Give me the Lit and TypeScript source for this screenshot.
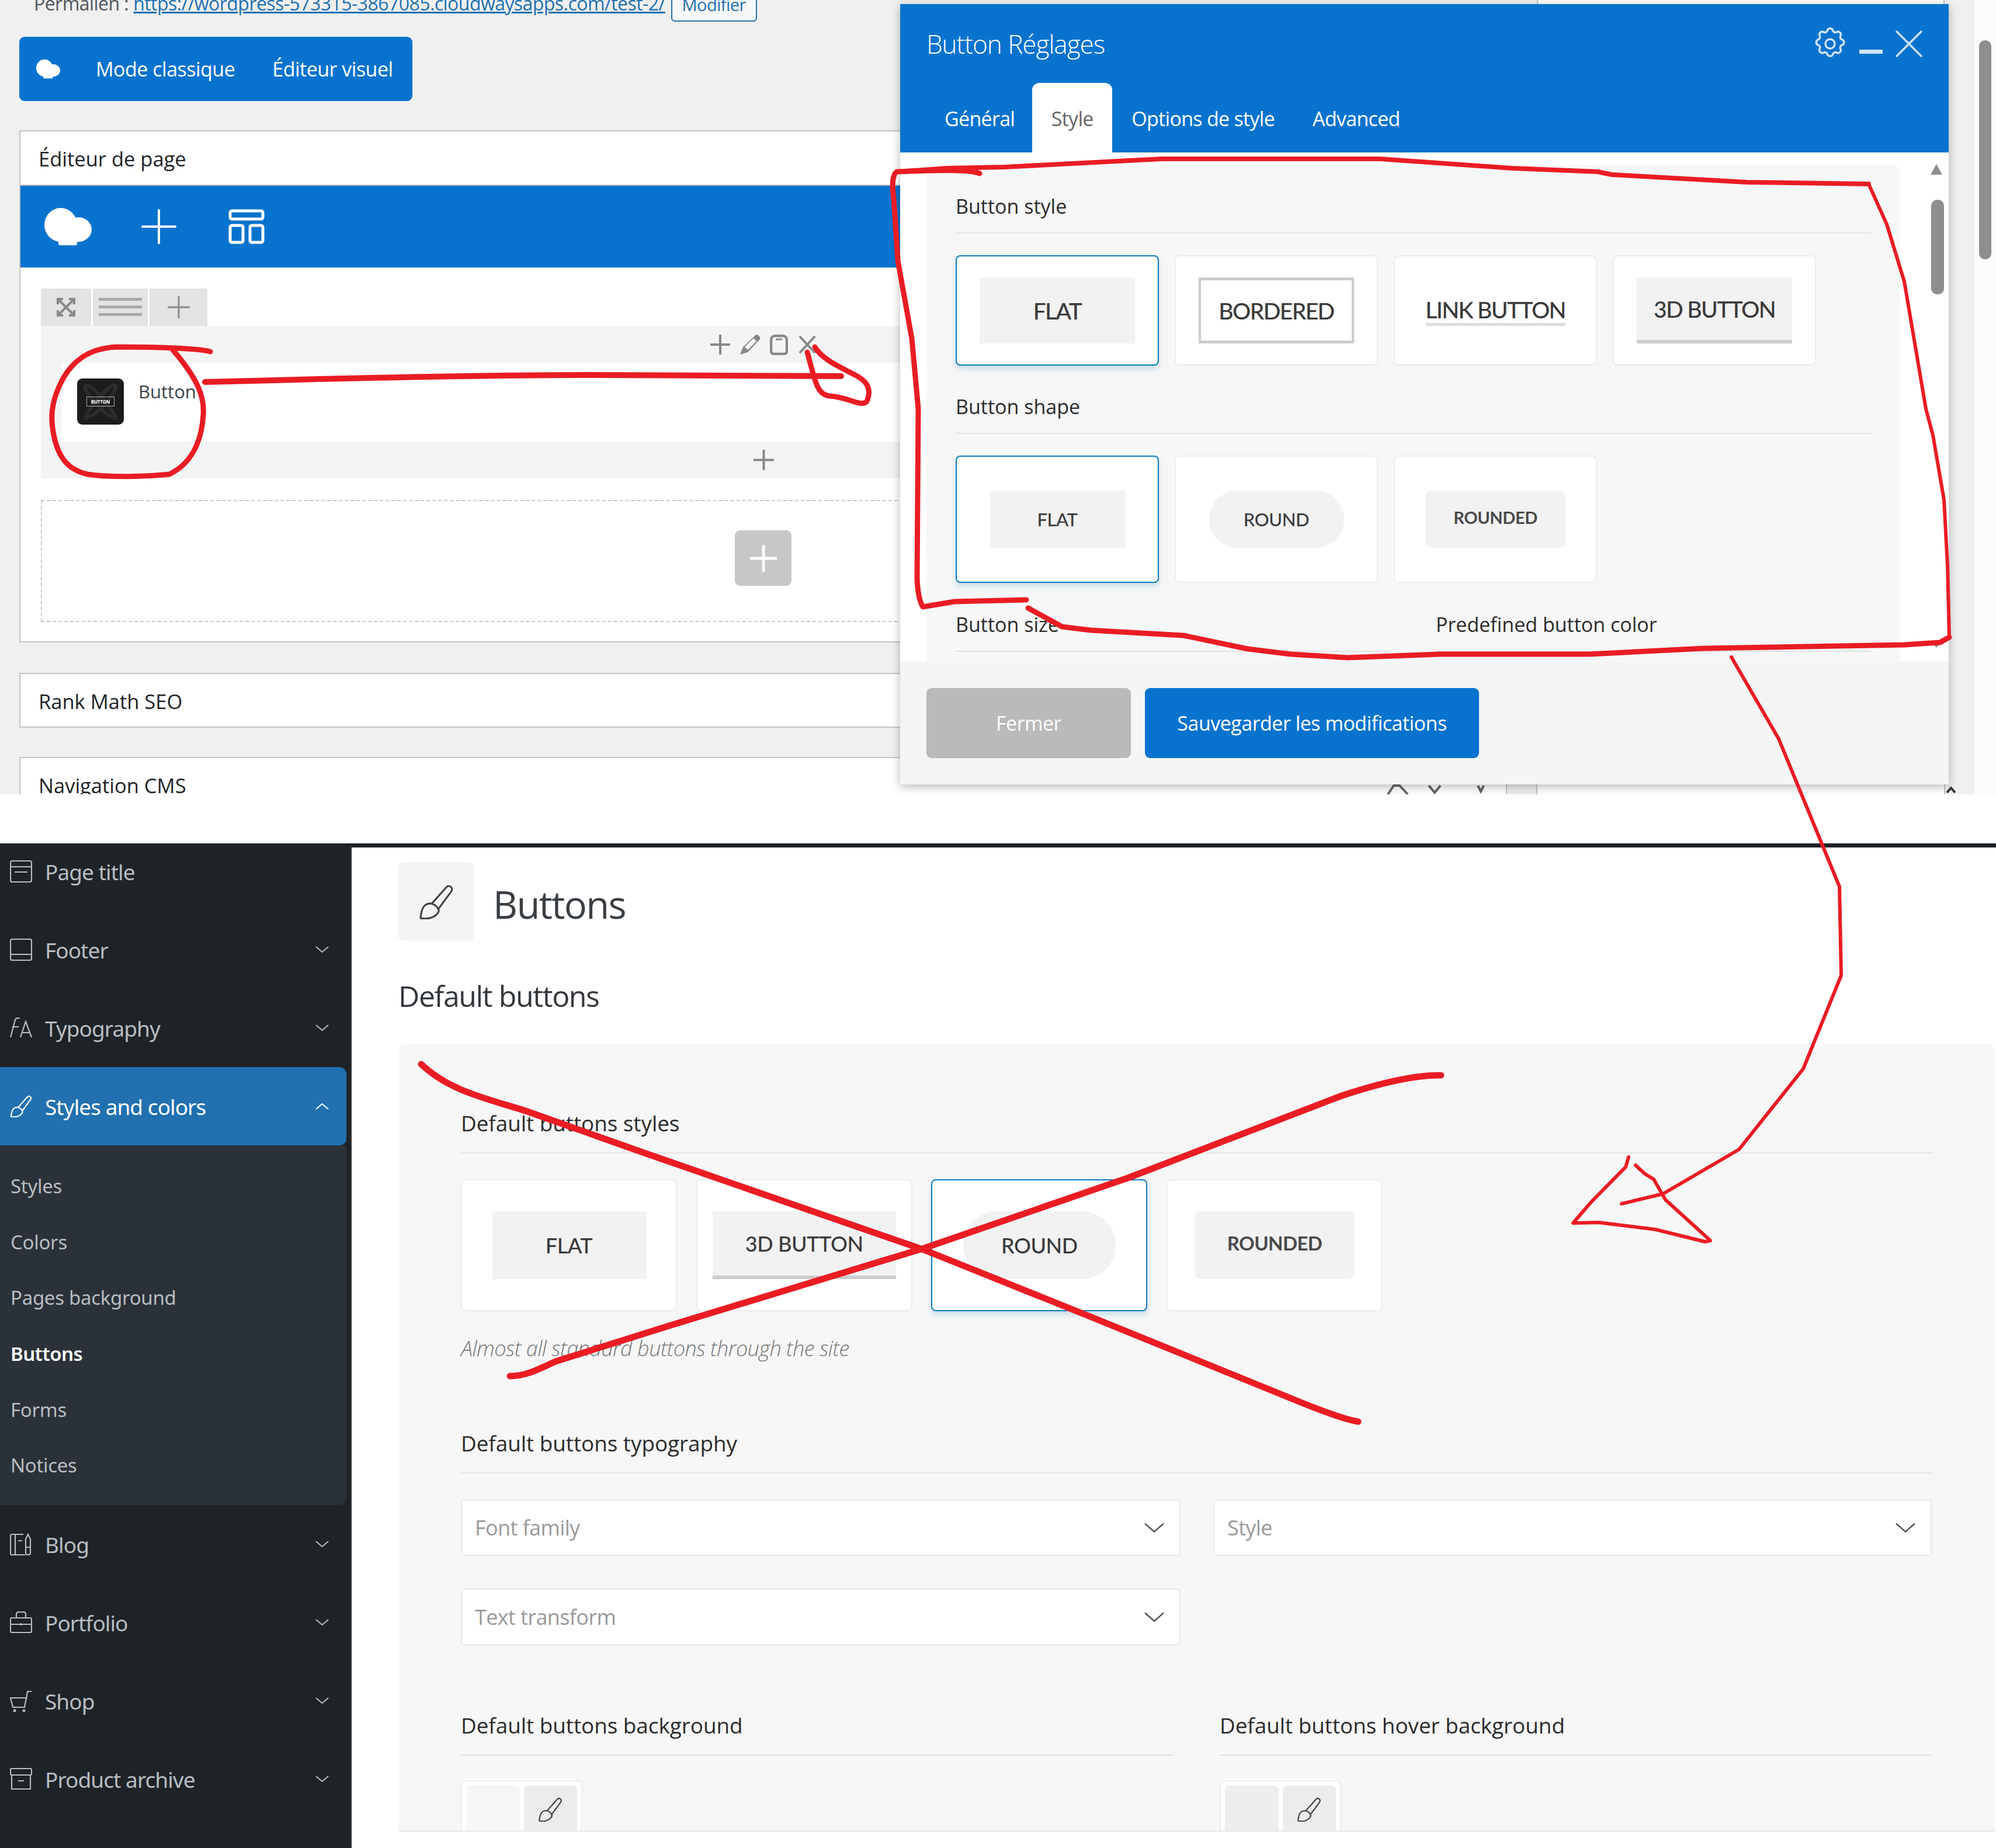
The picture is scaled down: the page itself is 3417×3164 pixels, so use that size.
import { LitElement, html, css, svg } from "lit";
import { customElement } from "lit/decorators.js";

const icons: Record<string, unknown> = {
  title: svg`<rect x="1" y="1" width="36" height="36" rx="3"/><path d="M1 11h36M8 20h22"/>`,
  footer: svg`<rect x="1" y="1" width="36" height="36" rx="3"/><path d="M1 27h36"/>`,
  type: svg`<path d="M1 35 L9 5 C10 2 12 2 17 2 M4 17h11M18 35L27 8 37 35M21 27h13"/>`,
  brush: svg`<path d="M14 21 L30 3 C33 0 38 4 35 8 L21 27 M14 21 C8 20 4 24 3 30 C2 35 1 37 3 37 C10 38 16 36 19 33 C22 30 22 28 21 27 C20 24 17 22 14 21Z"/>`,
  blog: svg`<path d="M14 2H3C2 2 1 3 1 4v31c0 1 1 2 2 2h23M9 2v35M14 2h9M14 13h7M31 2l-4 8v24c0 4 8 4 8 0V10zM27 24h8"/>`,
  case: svg`<rect x="1" y="11" width="36" height="25" rx="2"/><path d="M11 11V5c0-3 2-4 4-4h8c2 0 4 1 4 4v6M1 22h36M19 20v4"/>`,
  cart: svg`<path d="M1 14h27l-3 16H5zM28 16l2-13h7"/><circle cx="8" cy="36" r="1.4"/><circle cx="24" cy="36" r="1.4"/>`,
  archive: svg`<rect x="1" y="1" width="36" height="11" rx="2"/><path d="M3 12v24h32V12M14 22h10"/>`,
};

const subItems = ["Styles", "Colors", "Pages background", "Buttons", "Forms", "Notices"];

@customElement("app-root")
export class AppRoot extends LitElement {
  static styles = css`
    :host {
      display: block;
      position: relative;
      width: 3417px;
      height: 3164px;
      overflow: hidden;
      background: #fff;
      font-family: "Open Sans", "Noto Sans", sans-serif;
      color: #32373c;
    }
    svg { display: block; }

    /* upper screenshot */
    .upper { display: flex; height: 1360px; overflow: hidden; }
    .page { width: 3380px; background: #f0f0f0; padding: 0 50px 0 33px; box-sizing: border-box; flex: none; }
    .track { flex: 1; background: #fcfcfc; padding: 69px 8px 0; box-sizing: border-box; }
    .thumb { height: 375px; background: #8e8e8e; border-radius: 10px; }
    .permalink { display: flex; align-items: flex-start; height: 77px; margin-top: -14px; padding-left: 25px; font-size: 32px; line-height: 40px; color: #50575e; letter-spacing: -0.55px; white-space: nowrap; }
    .permalink a { color: #2271b1; text-decoration: underline; margin-left: 8px; }
    .edit-btn { margin-left: 10px; height: 51px; width: 147px; box-sizing: border-box; border: 2px solid #2271b1; border-radius: 6px; color: #2271b1; text-align: center; background: #f6f7f7; font-size: 29px; }
    .mode-bar { display: flex; align-items: center; width: 673px; height: 110px; background: #0873ce; border-radius: 9px; color: #fff; font-size: 34px; letter-spacing: -0.5px; padding-left: 29px; box-sizing: border-box; margin-bottom: 50px; white-space: nowrap; }
    .mode-bar .name1 { margin-left: 61px; }
    .mode-bar .name2 { margin-left: 64px; }
    .box { background: #fff; border: 2px solid #c3c4c7; box-sizing: border-box; }
    .box-title { height: 91px; display: flex; align-items: center; padding: 2px 0 0 31px; box-sizing: border-box; font-size: 34.5px; font-weight: 500; color: #1d2327; }
    .editor { height: 877px; margin-bottom: 52px; }
    .rank { height: 94px; margin-bottom: 50px; }
    .nav { height: 200px; }
    .builder-bar { display: flex; align-items: center; height: 142px; background: #0873ce; border-top: 2px solid #c3c4c7; padding-left: 41px; box-sizing: border-box; }
    .builder-bar .add { margin-left: 85px; }
    .builder-bar .grid { margin-left: 89px; }
    .builder-body { padding: 36px 0 0 35px; }
    .tabs-mini { display: flex; gap: 3px; height: 64px; }
    .tabs-mini > div { background: #e3e3e3; border-radius: 3px 3px 0 0; display: flex; align-items: center; justify-content: center; }
    .tab-a { width: 86px; }
    .tab-b { width: 94px; }
    .tab-c { width: 99px; }
    .row { background: #f4f4f4; }
    .row-head { display: flex; gap: 16px; align-items: center; height: 63px; padding-left: 1146px; box-sizing: border-box; }
    .row-head .x { margin-left: 3px; }
    .row-body { display: flex; height: 135px; margin-left: 35px; background: #fff; padding: 27px 0 0 27px; box-sizing: border-box; }
    .row-body span { margin-left: 25px; font-size: 31px; line-height: 44px; color: #3c434a; }
    .thumb-icon { width: 80px; height: 79px; background: #1c1c1c; border-radius: 9px; display: flex; align-items: center; justify-content: center; position: relative; }
    .thumb-icon b { font: 700 8px "Open Sans", sans-serif; color: #fff; border: 1px solid #aaa; padding: 2px 7px; z-index: 1; letter-spacing: -0.2px; }
    .thumb-icon svg { position: absolute; left: 8px; top: 6px; }
    .row-foot { display: flex; align-items: center; height: 63px; padding-left: 1220px; }
    .drop { margin-top: 37px; height: 209px; border: 2px dashed #c8c8c8; box-sizing: border-box; padding: 50px 0 0 1186px; }
    .drop div { width: 97px; height: 95px; background: #c7c7c7; border-radius: 9px; display: flex; align-items: center; justify-content: center; }

    /* strips of the page that show around the modal */
    .top-strip { position: absolute; left: 2631px; top: 0; width: 698px; height: 7px; background: #fff; border: 2px solid #c3c4c7; border-width: 0 2px; box-sizing: border-box; }
    .under-marks { position: absolute; left: 2360px; top: 1343px; }

    /* modal window */
    .modal { position: absolute; left: 1541px; top: 7px; width: 1795px; height: 1336px; background: #f5f5f5; box-shadow: 0 4px 16px rgba(0, 0, 0, 0.28); display: flex; flex-direction: column; }
    .modal-head { height: 254px; flex: none; background: #0873ce; color: #fff; box-sizing: border-box; padding: 0 45px; }
    .modal-top { display: flex; align-items: center; height: 135px; font-size: 44px; font-weight: 300; letter-spacing: -1px; }
    .modal-top .tools { margin-left: auto; display: flex; align-items: flex-start; height: 56px; }
    .gear { margin: -4px -4px 0; }
    .dash { margin: 38px 22px 0 22px; }
    .cross { margin-top: 5px; }
    .modal-tabs { display: flex; height: 119px; margin-left: 31px; font-size: 34px; letter-spacing: -0.7px; }
    .modal-tabs div { display: flex; align-items: center; padding-top: 2px; box-sizing: border-box; }
    .modal-tabs .on { background: #fff; color: #666; border-radius: 12px 12px 0 0; width: 137px; justify-content: center; margin: 0 33px 0 30px; }
    .modal-tabs .adv { margin-left: 65px; }
    .modal-body { height: 872px; flex: none; background: #fff; padding: 22px 84px 0 45px; box-sizing: border-box; position: relative; overflow: hidden; }
    .modal-panel { background: #f7f7f7; border-radius: 12px 12px 0 0; height: 850px; padding: 0 49px 0 50px; box-sizing: border-box; }
    .scroll-up, .scroll-down { position: absolute; left: 1764px; width: 0; height: 0; border-left: 10px solid transparent; border-right: 10px solid transparent; }
    .scroll-up { top: 20px; border-bottom: 18px solid #8e8e8e; }
    .scroll-down { top: 836px; border-top: 12px solid #8e8e8e; }
    .scroll-thumb { position: absolute; left: 1765px; top: 81px; width: 22px; height: 162px; background: #8e8e8e; border-radius: 10px; }
    .modal-foot { flex: 1; display: flex; gap: 24px; padding: 45px 45px 0; }
    .modal-foot div { height: 120px; border-radius: 9px; display: flex; align-items: center; justify-content: center; color: #fff; font-size: 34px; letter-spacing: -0.5px; }
    .close-btn { width: 350px; background: #bababa; }
    .save-btn { width: 572px; background: #0873ce; }

    .label { height: 117px; display: flex; align-items: flex-end; line-height: 44px; font-size: 34px; font-weight: 500; color: #2b2b2b; border-bottom: 2px solid #e2e2e2; box-sizing: border-box; padding-bottom: 23px; white-space: nowrap; }
    .cards { display: flex; gap: 27px; padding-top: 37px; }
    .card { background: #fff; border: 2px solid #ececec; border-radius: 8px; box-sizing: border-box; width: 348px; flex: none; display: flex; justify-content: center; font-family: Lato, sans-serif; color: #3a3a3a; white-space: nowrap; }
    .card.sel { border-color: #0a7bbd; box-shadow: 0 6px 10px rgba(10, 123, 189, 0.2); }
    .sample { display: flex; align-items: center; justify-content: center; background: #f2f2f2; box-sizing: border-box; }
    .styles-row .card { height: 189px; padding-top: 36px; font-size: 39px; letter-spacing: -1.6px; font-weight: 500; }
    .styles-row .sample { width: 266px; height: 113px; }
    .sample.bordered { background: #fff; border: 4px solid #ccc; border-top-width: 5px; border-bottom-width: 5px; }
    .styles-row .sample.link { background: none; height: auto; width: 239px; align-self: flex-start; margin-top: 32px; border-bottom: 5px solid #ddd; line-height: 46px; }
    .sample.d3 { border-bottom: 6px solid #ccc; }
    .shapes-row { padding-top: 37px; }
    .shapes-row .card { height: 218px; padding-top: 58px; font-size: 31px; font-weight: 500; letter-spacing: -0.4px; }
    .shapes-row .sample { width: 231px; height: 98px; }
    .sample.round { border-radius: 49px; }
    .sample.rounded { width: 240px; border-radius: 10px; padding-bottom: 8px; font-weight: 700; font-size: 29px; color: #4a4a4a; }
    .shapes-row .sample.rounded { width: 240px; }
    .two-col { display: flex; gap: 77px; margin-top: 7px; }
    .two-col .label { flex: 1; height: 111px; }

    /* lower screenshot */
    .lower { display: flex; height: 1720px; margin-top: 84px; border-top: 7px solid #1e2328; box-sizing: border-box; overflow: hidden; }
    .side { width: 600px; flex: none; margin-top: -7px; height: 1720px; overflow: hidden; background: #1e2328; color: #b9bdc1; font-family: "Noto Sans", sans-serif; font-size: 37px; letter-spacing: -0.95px; padding-right: 7px; box-sizing: border-box; }
    .side-list { margin-top: -19px; }
    .side-row { height: 134px; display: flex; align-items: center; padding-left: 17px; box-sizing: border-box; }
    .side-row svg.ico { flex: none; margin-right: 22px; }
    .side-row .chev { margin-left: auto; margin-right: 30px; }
    .side-row.on { background: #2270b0; color: #fff; border-radius: 0 12px 12px 0; }
    .sub { background: #2b3138; height: 616px; border-radius: 0 0 12px 0; padding-top: 22px; box-sizing: border-box; }
    .sub div { height: 95.6px; display: flex; align-items: center; padding-left: 18px; font-size: 33px; letter-spacing: -0.3px; }
    .sub .cur { color: #fff; font-weight: 600; letter-spacing: -0.6px; }

    .main { flex: 1; background: #fff; padding: 25px 0 0 80px; border-left: 2px solid #333; box-sizing: border-box; }
    .main-head { display: flex; align-items: center; gap: 33px; height: 135px; }
    .head-tile { width: 129px; height: 135px; background: #f4f4f4; border-radius: 9px; display: flex; align-items: center; justify-content: center; }
    .main-head h1 { margin: 0; padding-top: 8px; font-size: 65px; font-weight: 500; color: #3a3f44; letter-spacing: -1.6px; }
    .main h2 { margin: 0; height: 176px; box-sizing: border-box; padding-top: 12px; display: flex; align-items: center; font-size: 50px; font-weight: 500; color: #32373c; letter-spacing: -1.4px; }
    .panel { height: 1349px; overflow: hidden; background: #f7f7f7; border-radius: 12px 12px 0 0; border-bottom: 2px solid #e8e8e8; margin-right: 2px; box-sizing: border-box; padding: 0 107px 0 107px; }
    .panel .label { font-size: 36.8px; height: 188px; padding-bottom: 25px; line-height: 50px; }
    .big-cards { display: flex; gap: 32.7px; padding-top: 44px; }
    .big-cards .card { width: 370px; height: 226px; padding-top: 53px; font-size: 36px; font-weight: 500; letter-spacing: -0.4px; }
    .big-cards .sample { width: 263px; height: 116px; }
    .big-cards .sample.d3 { width: 314px; }
    .big-cards .sample.round { border-radius: 58px; width: 261px; }
    .big-cards .sample.rounded { width: 273px; font-size: 33px; letter-spacing: -0.6px; }
    .hint { margin-top: 42px; font-size: 36px; font-style: italic; font-weight: 300; color: #777; letter-spacing: -0.5px; line-height: 44px; }
    .panel .label.typo { height: 192px; }
    .selects { display: grid; grid-template-columns: 1232px 1230px; column-gap: 56px; row-gap: 56px; padding-top: 44px; }
    .select { height: 97px; background: #fff; border: 2px solid #e8e8e8; border-radius: 6px; box-sizing: border-box; display: flex; align-items: center; padding: 0 26px 0 22px; font-size: 36px; color: #999; letter-spacing: -0.6px; justify-content: space-between; }
    .duo { display: grid; grid-template-columns: 1219px 1219px; column-gap: 80px; margin-top: 3px; }
    .duo .label { height: 186px; }
    .swatch { margin-top: 42px; width: 208px; height: 120px; background: #fff; border: 2px solid #eee; border-radius: 8px; box-sizing: border-box; display: flex; gap: 7px; padding: 7px; }
    .swatch i { flex: 1; height: 90px; background: #f6f6f6; border-radius: 8px; }
    .swatch.dark i { background: #eee; }
    .swatch b { flex: 1; height: 82px; padding-bottom: 8px; background: #ececec; border-radius: 8px; display: flex; align-items: center; justify-content: center; }

    .ink { position: absolute; left: 0; top: 0; pointer-events: none; }
  `;

  private cloud(w: number, h: number) {
    return html`<svg width=${w} height=${h} viewBox="0 0 81 64" fill="#fff"><ellipse cx="28" cy="29" rx="28" ry="29"/><ellipse cx="58" cy="37" rx="23" ry="21"/><rect x="24" y="50" width="32" height="14" rx="3"/></svg>`;
  }

  private plus(size: number, color: string, weight = 3) {
    return html`<svg width=${size} height=${size} viewBox="0 0 60 60"><path d="M30 2v56M2 30h56" stroke=${color} stroke-width=${weight * 60 / size} fill="none" stroke-linecap="round"/></svg>`;
  }

  private sideIcon(icon: string, color: string) {
    return html`<svg class="ico" width="38" height="38" viewBox="0 0 38 38" fill="none" stroke=${color} stroke-width="2.2">${icons[icon]}</svg>`;
  }

  private sideRow(icon: string, name: string, chev = true) {
    return html`<div class="side-row">
      ${this.sideIcon(icon, "#b9bdc1")}
      ${name}
      ${chev ? this.chev("#b9bdc1") : ""}
    </div>`;
  }

  private chev(color: string, up = false) {
    return html`<svg class="chev" width="23" height="12" viewBox="0 0 23 12" fill="none" stroke=${color} stroke-width="2"><path d=${up ? "M1 11 11.5 2 22 11" : "M1 1l10.5 9L22 1"}/></svg>`;
  }

  private brush(size: number, color: string) {
    return html`<svg width=${size} height=${size} viewBox="0 0 38 38" fill="none" stroke=${color} stroke-width="2">${icons.brush}</svg>`;
  }

  private selectBox(name: string) {
    return html`<div class="select">${name}<svg width="34" height="18" viewBox="0 0 36 18" fill="none" stroke="#444" stroke-width="2.4"><path d="M1 1l17 15L35 1"/></svg></div>`;
  }

  private ink() {
    return html`<svg class="ink" width="3417" height="3164" viewBox="0 0 3417 3164" fill="none" stroke="#ea1c24" stroke-linecap="round" stroke-linejoin="round">
      <path stroke-width="9" d="M360 602 C340 596 260 594 200 594 C150 596 120 620 102 660 C88 690 86 715 92 745 C100 785 118 805 150 812 C190 818 250 816 290 812 C325 795 345 760 348 710 C350 680 340 650 295 598"/>
      <path stroke-width="10" d="M351 654 C500 650 800 642 1000 642 L1440 644"/>
      <path stroke-width="9" d="M1395 594 C1405 612 1430 625 1460 640 C1485 652 1492 665 1485 685 C1478 700 1455 680 1420 678 C1398 676 1395 650 1382 603"/>
      <path stroke-width="9" d="M1677 297 C1660 290 1610 291 1535 294 C1527 300 1527 320 1530 340 L1537 446 L1561 580 L1572 700 L1570 990 C1571 1015 1574 1030 1580 1039 L1634 1030 L1757 1027"/>
      <path stroke-width="9" d="M1760 1041 L1818 1073 L1867 1079 L2026 1088 L2136 1111 L2209 1120 L2307 1126 L2466 1120 L2722 1120 L2918 1110 L3260 1104 L3321 1100 L3337 1091"/>
      <path stroke-width="6" d="M3337 1091 L3334 968 L3328 856 L3309 745 L3297 700 L3260 482 L3230 384 L3199 315"/>
      <path stroke-width="8" d="M3199 315 L2991 312 L2759 299 L2735 294 L2588 288 L2362 272 L1989 272 L1720 286 L1622 288 L1537 294"/>
      <path stroke-width="6" d="M2964 1125 L3045 1265 L3149 1518 L3152 1670 L3087 1830 L2977 1968 L2847 2044 L2776 2061"/>
      <path stroke-width="6" d="M2788 1981 L2783 1998 L2724 2058 L2693 2094 L2737 2093 L2834 2105 L2919 2126 L2928 2124 L2851 2054 L2831 2019 L2815 2009 L2800 1995"/>
      <path stroke-width="11" d="M721 1822 C770 1868 830 1880 900 1902 L1109 1976 L1582 2140 L1861 2252 L2200 2390 C2260 2415 2300 2430 2325 2434"/>
      <path stroke-width="11" d="M2467 1841 C2420 1840 2360 1855 2297 1876 L1933 2016 L1582 2137 L1145 2270 L951 2331 C920 2345 900 2356 873 2356"/>
    </svg>`;
  }

  render() {
    return html`
      <section class="upper">
        <div class="page">
          <div class="permalink">
            Permalien :
            <a>https://wordpress-573315-3867085.cloudwaysapps.com/test-2/</a>
            <span class="edit-btn">Modifier</span>
          </div>
          <div class="mode-bar">
            ${this.cloud(41, 34)}
            <span class="name1">Mode classique</span>
            <span class="name2">Éditeur visuel</span>
          </div>
          <div class="box editor">
            <div class="box-title">Éditeur de page</div>
            <div class="builder-bar">
              ${this.cloud(81, 64)}
              <span class="add">${this.plus(60, "#fff", 4)}</span>
              <svg class="grid" width="62" height="60" viewBox="0 0 62 60" fill="none" stroke="#fff" stroke-width="5"><rect x="3" y="3" width="56" height="14" rx="3"/><rect x="3" y="28" width="22" height="29" rx="3"/><rect x="37" y="28" width="22" height="29" rx="3"/></svg>
            </div>
            <div class="builder-body">
              <div class="tabs-mini">
                <div class="tab-a">
                  <svg width="34" height="34" viewBox="0 0 34 34" fill="none" stroke="#888" stroke-width="4"><path d="M3 12V3h9M31 22v9h-9M3 3l28 28M31 12V3h-9M3 22v9h9M31 3 3 31"/></svg>
                </div>
                <div class="tab-b">
                  <svg width="74" height="32" viewBox="0 0 74 32" fill="#aaa"><rect y="0" width="74" height="5"/><rect y="13" width="74" height="5"/><rect y="26" width="74" height="5"/></svg>
                </div>
                <div class="tab-c">${this.plus(38, "#888", 3)}</div>
              </div>
              <div class="row">
                <div class="row-head">
                  ${this.plus(34, "#888", 4)}
                  <svg width="36" height="36" viewBox="0 0 36 36" fill="#888"><path d="M1 35 6 22 27 2c2-2 5-1 7 2 2 2 2 4 0 6L14 31zM9 22l5 5 15-15-5-5z" fill-rule="evenodd"/></svg>
                  <svg width="31" height="36" viewBox="0 0 31 36" fill="none" stroke="#888" stroke-width="4.5"><path d="M9 3h13c4 0 7 3 7 7v19c0 3-2 5-5 5H7c-3 0-5-2-5-5V10c0-4 3-7 7-7z"/><path d="M10 9h11" stroke-width="3"/></svg>
                  <svg class="x" width="28" height="30" viewBox="0 0 28 30" stroke="#888" stroke-width="4" stroke-linecap="round"><path d="M2 2l24 26M26 2 2 28"/></svg>
                </div>
                <div class="row-body">
                  <div class="thumb-icon">
                    <svg width="64" height="67" viewBox="0 0 64 67" fill="none" stroke="#2c2c2c" stroke-width="6"><path d="M6 6c12-4 50 45 52 55C46 65 2 18 6 6zM58 6C46 2 8 51 6 61c12 4 56-43 52-55z"/></svg>
                    <b>BUTTON</b>
                  </div>
                  <span>Button</span>
                </div>
                <div class="row-foot">${this.plus(35, "#888", 4)}</div>
              </div>
              <div class="drop">
                <div>${this.plus(46, "#fff", 5)}</div>
              </div>
            </div>
          </div>
          <div class="box rank"><div class="box-title">Rank Math SEO</div></div>
          <div class="box nav"><div class="box-title">Navigation CMS</div></div>
        </div>
        <div class="track"><div class="thumb"></div></div>
      </section>

      <section class="lower">
        <nav class="side">
          <div class="side-list">
            ${this.sideRow("title", "Page title", false)}
            ${this.sideRow("footer", "Footer")}
            ${this.sideRow("type", "Typography")}
            <div class="side-row on">
              ${this.sideIcon("brush", "#fff")}
              Styles and colors
              ${this.chev("#fff", true)}
            </div>
            <div class="sub">
              ${subItems.map((s) => html`<div class=${s === "Buttons" ? "cur" : ""}>${s}</div>`)}
            </div>
            ${this.sideRow("blog", "Blog")}
            ${this.sideRow("case", "Portfolio")}
            ${this.sideRow("cart", "Shop")}
            ${this.sideRow("archive", "Product archive")}
          </div>
        </nav>
        <main class="main">
          <div class="main-head">
            <div class="head-tile">${this.brush(60, "#444")}</div>
            <h1>Buttons</h1>
          </div>
          <h2>Default buttons</h2>
          <div class="panel">
            <div class="label">Default buttons styles</div>
            <div class="big-cards">
              <div class="card"><div class="sample">FLAT</div></div>
              <div class="card"><div class="sample d3">3D BUTTON</div></div>
              <div class="card sel"><div class="sample round">ROUND</div></div>
              <div class="card"><div class="sample rounded">ROUNDED</div></div>
            </div>
            <div class="hint">Almost all standard buttons through the site</div>
            <div class="label typo">Default buttons typography</div>
            <div class="selects">
              ${this.selectBox("Font family")}
              ${this.selectBox("Style")}
              ${this.selectBox("Text transform")}
            </div>
            <div class="duo">
              <div>
                <div class="label">Default buttons background</div>
                <div class="swatch"><i></i><b>${this.brush(42, "#444")}</b></div>
              </div>
              <div>
                <div class="label">Default buttons hover background</div>
                <div class="swatch dark"><i></i><b>${this.brush(42, "#444")}</b></div>
              </div>
            </div>
          </div>
        </main>
      </section>

      <div class="top-strip"></div>
      <svg class="under-marks" width="1000" height="17" viewBox="0 0 1000 17" fill="none" stroke="#666" stroke-width="4">
        <path d="M16 17 L26 2 L36 2 L50 17"/>
        <path d="M86 2 L96 14 L106 2"/>
        <path d="M170 2 L175 12 L180 2"/>
        <rect x="219" y="-4" width="52" height="26" fill="#eee" stroke="#c3c4c7" stroke-width="2"/>
        <path d="M969 -2V17" stroke="#c3c4c7" stroke-width="2"/>
        <path d="M973 14 L980 6 L987 14" stroke="#333"/>
      </svg>

      <div class="modal">
        <div class="modal-head">
          <div class="modal-top">
            Button Réglages
            <div class="tools">
              <svg class="gear" width="64" height="64" viewBox="0 0 24 24" fill="none" stroke="#cfe3f7" stroke-width="1.3" stroke-linejoin="round"><circle cx="12" cy="12" r="3"/><path d="M10.3 2.3c.4-1.5 3-1.5 3.4 0a1.7 1.7 0 0 0 2.6 1.1c1.4-.8 3.2 1 2.4 2.4a1.7 1.7 0 0 0 1 2.5c1.6.5 1.6 3 0 3.5a1.7 1.7 0 0 0-1 2.5c.8 1.4-1 3.2-2.4 2.4a1.7 1.7 0 0 0-2.6 1.1c-.4 1.5-3 1.5-3.4 0a1.7 1.7 0 0 0-2.6-1.1c-1.4.8-3.2-1-2.4-2.4a1.7 1.7 0 0 0-1-2.5c-1.6-.5-1.6-3 0-3.500a1.7 1.7 0 0 0 1-2.5c-.8-1.4 1-3.2 2.4-2.4a1.7 1.7 0 0 0 2.6-1.1z" transform="translate(0 1)"/></svg>
              <svg class="dash" width="40" height="7" viewBox="0 0 40 7"><rect width="40" height="7" fill="#cfe3f7"/></svg>
              <svg class="cross" width="46" height="46" viewBox="0 0 46 46" stroke="#cfe3f7" stroke-width="3.5" stroke-linecap="round"><path d="M2 2l42 42M44 2 2 44"/></svg>
            </div>
          </div>
          <div class="modal-tabs">
            <div>Général</div>
            <div class="on">Style</div>
            <div>Options de style</div>
            <div class="adv">Advanced</div>
          </div>
        </div>
        <div class="modal-body">
          <div class="modal-panel">
            <div class="label">Button style</div>
            <div class="cards styles-row">
              <div class="card sel"><div class="sample">FLAT</div></div>
              <div class="card"><div class="sample bordered">BORDERED</div></div>
              <div class="card"><div class="sample link">LINK BUTTON</div></div>
              <div class="card"><div class="sample d3">3D BUTTON</div></div>
            </div>
            <div class="label">Button shape</div>
            <div class="cards shapes-row">
              <div class="card sel"><div class="sample">FLAT</div></div>
              <div class="card"><div class="sample round">ROUND</div></div>
              <div class="card"><div class="sample rounded">ROUNDED</div></div>
            </div>
            <div class="two-col">
              <div class="label">Button size</div>
              <div class="label">Predefined button color</div>
            </div>
          </div>
          <div class="scroll-up"></div>
          <div class="scroll-thumb"></div>
          <div class="scroll-down"></div>
        </div>
        <div class="modal-foot">
          <div class="close-btn">Fermer</div>
          <div class="save-btn">Sauvegarder les modifications</div>
        </div>
      </div>

      ${this.ink()}
    `;
  }
}
